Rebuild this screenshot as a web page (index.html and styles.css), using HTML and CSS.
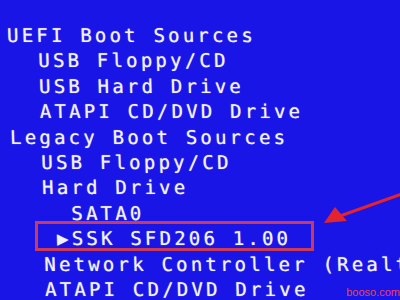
FILE: index.html
```html
<!DOCTYPE html>
<html lang="en">
<head>
    <meta charset="UTF-8">
    <meta name="viewport" content="width=device-width, initial-scale=1.0">
    <title>Boot Sources</title>
    <link rel="stylesheet" href="styles.css">
</head>
<body>
    <div class="screen">
        <ul class="boot-list">
            <li class="lvl0">UEFI Boot Sources</li>
            <li class="lvl1">USB Floppy/CD</li>
            <li class="lvl1">USB Hard Drive</li>
            <li class="lvl1">ATAPI CD/DVD Drive</li>
            <li class="lvl0">Legacy Boot Sources</li>
            <li class="lvl1">USB Floppy/CD</li>
            <li class="lvl1">Hard Drive</li>
            <li class="lvl2">SATA0</li>
            <li class="selected">&#9654;SSK SFD206 1.00</li>
            <li class="lvl1">Network Controller (Realtek)</li>
            <li class="lvl1">ATAPI CD/DVD Drive</li>
        </ul>

        <!-- annotation drawn over the photo: box round the usb stick + arrow -->
        <svg class="annotation" width="400" height="300" viewBox="0 0 400 300">
            <rect x="36.5" y="222.5" width="276" height="27" fill="none" stroke="#c93a5c" stroke-width="3"/>
            <line x1="402" y1="194" x2="340" y2="216" stroke="#e2242e" stroke-width="3"/>
            <polygon points="324,223 335,207 347,221" fill="#e2242e"/>
        </svg>

        <span class="watermark">booso.com</span>
    </div>
</body>
</html>
```

FILE: styles.css
```css
body {
    margin: 0;
    background: #1815e6;
}

.screen {
    position: relative;
    width: 400px;
    height: 300px;
    overflow: hidden;
    background: #1815e6;
}

.boot-list {
    list-style: none;
    margin: 0;
    padding: 23px 0 0 0;
    font-family: "DejaVu Sans Mono", "Liberation Mono", monospace;
    font-size: 19px;
    line-height: 25.4px;
    letter-spacing: 3.2px;
    color: #f2f1ff;
    text-shadow: 0 0 1px rgba(255, 255, 255, 0.7);
    white-space: nowrap;
    /* the photo is taken at a slight angle */
    transform: skewX(1.7deg);
    transform-origin: 0 0;
}

.lvl0 {
    padding-left: 6px;
}
.lvl1 {
    padding-left: 36.5px;
}
.lvl2 {
    padding-left: 65px;
}
.selected {
    padding-left: 50px;
}

.annotation {
    position: absolute;
    top: 0;
    left: 0;
}

.watermark {
    position: absolute;
    right: 0;
    bottom: 2px;
    font-family: "Liberation Sans", sans-serif;
    font-size: 11px;
    color: #ee4258;
}
```
